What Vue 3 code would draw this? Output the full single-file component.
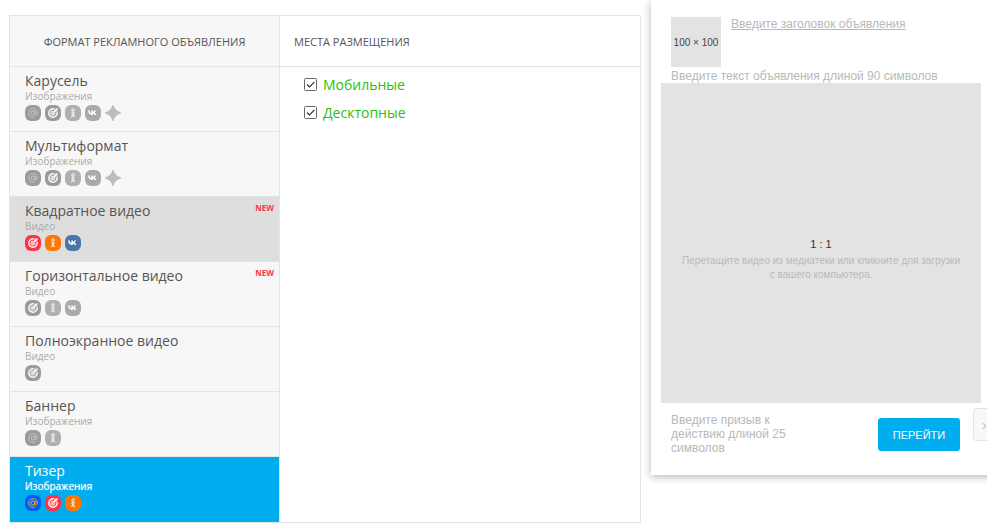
<script setup>
const C = { mail: '#9b9b9b', target: '#9b9b9b', ok: '#b0b0b0', vk: '#aaaaaa' }
const formats = [
  { name: 'Карусель', kind: 'Изображения', icons: ['mail', 'target', 'ok', 'vk', 'star'] },
  { name: 'Мультиформат', kind: 'Изображения', icons: ['mail', 'target', 'ok', 'vk', 'star'] },
  { name: 'Квадратное видео', kind: 'Видео', icons: ['target', 'ok', 'vk'], isNew: true, state: 'hover', color: true },
  { name: 'Горизонтальное видео', kind: 'Видео', icons: ['target', 'ok', 'vk'], isNew: true },
  { name: 'Полноэкранное видео', kind: 'Видео', icons: ['target'] },
  { name: 'Баннер', kind: 'Изображения', icons: ['mail', 'ok'] },
  { name: 'Тизер', kind: 'Изображения', icons: ['mail', 'target', 'ok'], state: 'active', color: true }
]
const brand = { mail: '#005ff9', target: '#ff3347', ok: '#ff7700', vk: '#4a76a8' }
const fill = (icon, color) => (color ? brand[icon] : C[icon])
</script>

<template>
  <div class="page">
    <div class="table">
      <div class="left">
        <div class="head head-left">ФОРМАТ РЕКЛАМНОГО ОБЪЯВЛЕНИЯ</div>
        <div v-for="f in formats" :key="f.name" class="item" :class="f.state">
          <span v-if="f.isNew" class="new">NEW</span>
          <div class="name">{{ f.name }}</div>
          <div class="kind">{{ f.kind }}</div>
          <div class="icons">
            <svg v-for="icon in f.icons" :key="icon" width="16" height="16" viewBox="0 0 16 16">
              <template v-if="icon === 'star'">
                <path d="M8 0.500C9 4.500 11.500 7 15.800 8 11.500 9 9 11.500 8 15.500 7 11.500 4.500 9 0.200 8 4.500 7 7 4.500 8 0.500Z" fill="#bdbdbd" stroke="#bdbdbd" stroke-width="1.200" stroke-linejoin="round" />
              </template>
              <template v-else>
                <rect width="16" height="16" rx="6" :fill="fill(icon, f.color)" />
                <g v-if="icon === 'mail'" fill="none" :stroke="f.color ? '#f5a623' : '#c4c4c4'" stroke-width="1">
                  <circle cx="8" cy="8" r="2" />
                  <path d="M10 6v2.800c0 1.600 2.300 1.400 2.300-.8A4.300 4.300 0 1 0 10.200 11.700" />
                </g>
                <g v-else-if="icon === 'target'" fill="none" stroke="#fff">
                  <path d="M8.800 3.900A4.200 4.200 0 1 0 12.100 7.200" stroke-width="1.400" />
                  <path d="M7.200 8.800 12.500 3.500" stroke-width="1.300" />
                  <path d="M10 3.600V6h2.400" stroke-width="1.100" />
                  <path d="M8.500 6.200A2 2 0 1 0 9.800 7.500" stroke-width="1" />
                </g>
                <g v-else-if="icon === 'ok'" fill="none" stroke="#fff" stroke-opacity=".85" stroke-width="1.100">
                  <circle cx="8" cy="5" r="1.200" />
                  <circle cx="8" cy="8.300" r="1.100" />
                  <path d="M6.300 12 8 10.200 9.700 12" />
                </g>
                <path v-else-if="icon === 'vk'" d="M3 5.500h1.700c.1 1.800 1 2.700 1.600 2.900V5.500h1.600V7c.6-.1 1.300-.8 1.600-1.500h1.600c-.3 1-1 1.800-1.600 2.200.6.300 1.500 1 1.900 2.300h-1.800c-.3-.9-1-1.500-1.700-1.600V10h-.3C5 10 3.200 8.400 3 5.500Z" fill="#fff" />
              </template>
            </svg>
          </div>
        </div>
      </div>
      <div class="right">
        <div class="head head-right">МЕСТА РАЗМЕЩЕНИЯ</div>
        <div class="options">
          <label v-for="o in ['Мобильные', 'Десктопные']" :key="o" class="option">
            <svg width="13" height="13" viewBox="0 0 13 13">
              <rect x=".5" y=".5" width="12" height="12" rx="1" fill="#fff" stroke="#666" />
              <path d="M3 6.500 5.500 9 10.500 3.800" fill="none" stroke="#333" stroke-width="1.200" />
            </svg>
            <span>{{ o }}</span>
          </label>
        </div>
      </div>
    </div>

    <aside class="preview">
      <div class="top">
        <div class="thumb">100 × 100</div>
        <a class="title">Введите заголовок объявления</a>
      </div>
      <div class="text">Введите текст объявления длиной 90 символов</div>
      <div class="media">
        <div class="ratio">1 : 1</div>
        <div class="hint">Перетащите видео из медиатеки или кликните для загрузки<br />с вашего компьютера.</div>
      </div>
      <div class="bottom">
        <div class="cta">Введите призыв к действию длиной 25 символов</div>
        <button class="go">ПЕРЕЙТИ</button>
        <button class="next">›</button>
      </div>
    </aside>
  </div>
</template>

<style scoped>
.page {
  display: flex;
  align-items: flex-start;
  width: 987px;
  height: 527px;
  overflow: hidden;
  padding-left: 9px;
  box-sizing: border-box;
  background: #fff;
  font-family: "Open Sans", sans-serif;
}
.table {
  display: flex;
  flex: none;
  width: 632px;
  height: 508px;
  margin-top: 15px;
  box-sizing: border-box;
  border: 1px solid #e4e4e4;
}
.left {
  flex: none;
  width: 270px;
  box-sizing: border-box;
  border-right: 1px solid #e4e4e4;
  background: #f7f7f7;
}
.right { flex: 1; background: #fff; }
.head {
  display: flex;
  align-items: center;
  height: 50px;
  margin-bottom: 1px;
  box-sizing: border-box;
  box-shadow: 0 1px 0 #e4e4e4;
  font-size: 11px;
  color: #555;
}
.head-left { justify-content: center; }
.head-right { padding-left: 14px; }
.item {
  position: relative;
  height: 65px;
  box-sizing: border-box;
  padding: 5px 0 0 15px;
  border-bottom: 1px solid #e4e4e4;
}
.item:last-child { border-bottom: 0; }
.item.hover { background: #dedede; }
.item.active { background: #00aeef; color: #fff; }
.name { font-size: 14px; line-height: 17px; color: #555; }
.kind { font-size: 10px; line-height: 14px; color: #aaa; }
.icons { display: flex; gap: 4px; margin-top: 2px; }
.icons svg { display: block; }
.active .name { color: #fff; }
.active .kind { color: #fff; text-shadow: 0 0 1px rgba(255, 255, 255, .7); }
.new {
  position: absolute;
  top: 5px;
  right: 5px;
  font-size: 8px;
  line-height: 11px;
  font-weight: 700;
  color: #ff3347;
}
.options { padding: 3px 0 0 24px; }
.option {
  display: flex;
  align-items: center;
  gap: 6px;
  height: 28px;
  font-size: 14px;
  color: #2dbd12;
}
.option svg { flex: none; }
.preview {
  flex: none;
  width: 360px;
  height: 475px;
  margin-left: 10px;
  box-sizing: border-box;
  background: #fff;
  box-shadow: 0 2px 8px rgba(0, 0, 0, .28);
  font-family: "Liberation Sans", Arial, sans-serif;
  color: #b8b8b8;
}
.top { display: flex; padding: 17px 0 0 20px; height: 67px; box-sizing: border-box; }
.thumb {
  flex: none;
  display: flex;
  align-items: center;
  justify-content: center;
  width: 50px;
  height: 50px;
  background: #e3e3e3;
  font-size: 10px;
  color: #444;
}
.title {
  margin-left: 10px;
  font-size: 12px;
  line-height: 14px;
  text-decoration: underline;
}
.text { height: 16px; padding: 2px 0 0 20px; box-sizing: border-box; font-size: 12px; line-height: 14px; }
.media {
  display: flex;
  flex-direction: column;
  align-items: center;
  justify-content: center;
  width: 320px;
  height: 320px;
  margin-left: 10px;
  padding-top: 32px;
  box-sizing: border-box;
  background: #e3e3e3;
  text-align: center;
}
.ratio { font-size: 11px; line-height: 12px; color: #333; margin-bottom: 4px; margin-top: 2px; }
.hint { font-size: 10px; line-height: 14px; color: #bababa; }
.bottom { display: flex; align-items: flex-start; padding: 10px 0 0 20px; }
.cta { flex: none; width: 125px; font-size: 12px; line-height: 14px; margin-right: 82px; }
.go {
  flex: none;
  width: 82px;
  height: 33px;
  margin-top: 5px;
  padding: 0;
  border: 0;
  border-radius: 3px;
  background: #00aeef;
  color: #fff;
  font: 11px "Liberation Sans", Arial, sans-serif;
}
.next {
  flex: none;
  width: 40px;
  height: 33px;
  margin: -5px 0 0 13px;
  border: 1px solid #e4e4e4;
  border-radius: 3px;
  background: #f8f8f8;
  color: #bbb;
  text-align: left;
  padding: 0 0 0 8px;
  font: 14px "Liberation Sans", Arial, sans-serif;
}
</style>

<style>
html, body { overflow: hidden; background: #fff; }
</style>
